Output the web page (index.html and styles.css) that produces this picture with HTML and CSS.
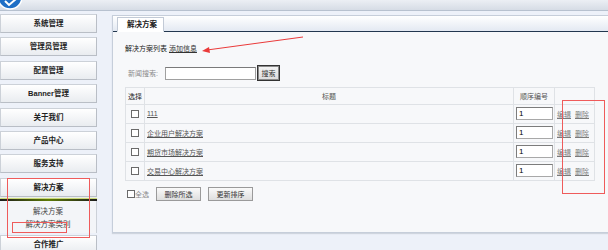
FILE: index.html
```html
<!DOCTYPE html>
<html lang="zh-CN">
<head>
    <meta charset="UTF-8">
    <title>解决方案</title>
    <link rel="stylesheet" href="styles.css">
</head>
<body>
    <div class="topbar">
        <svg class="logo" width="22" height="10" viewBox="0 0 22 10">
            <circle cx="10" cy="-3" r="12" fill="#1f6fc6" stroke="#ffffff" stroke-width="1.5"/>
            <path d="M5 1 L9 5 L16 -1" fill="none" stroke="#ffffff" stroke-width="2"/>
        </svg>
    </div>

    <div class="layout">
        <div class="sidebar">
            <a class="menu-btn">系统管理</a>
            <a class="menu-btn">管理员管理</a>
            <a class="menu-btn">配置管理</a>
            <a class="menu-btn">Banner管理</a>
            <a class="menu-btn">关于我们</a>
            <a class="menu-btn">产品中心</a>
            <a class="menu-btn">服务支持</a>
            <a class="menu-btn">解决方案</a>
            <div class="menu-divider"></div>
            <ul class="submenu">
                <li>解决方案</li>
                <li>解决方案类别</li>
            </ul>
            <a class="menu-btn">合作推广</a>
        </div>

        <div class="panel">
            <div class="panel-tabs">
                <span class="tab">解决方案</span>
            </div>
            <div class="panel-body">
                <div class="list-head">解决方案列表 <a class="link">添加信息</a></div>

                <div class="search-row">
                    <span class="search-label">新闻搜索:</span>
                    <input class="search-input" type="text">
                    <button class="search-btn">搜索</button>
                </div>

                <table class="list-table">
                    <colgroup>
                        <col class="col-check">
                        <col class="col-title">
                        <col class="col-order">
                        <col class="col-ops">
                    </colgroup>
                    <tr>
                        <th class="th-left">选择</th>
                        <th>标题</th>
                        <th>顺序编号</th>
                        <th></th>
                    </tr>
                    <tr>
                        <td class="center"><span class="check"></span></td>
                        <td><a class="link">111</a></td>
                        <td><input class="order-input" value="1"></td>
                        <td class="ops"><a class="op">编辑</a><a class="op">删除</a></td>
                    </tr>
                    <tr>
                        <td class="center"><span class="check"></span></td>
                        <td><a class="link">企业用户解决方案</a></td>
                        <td><input class="order-input" value="1"></td>
                        <td class="ops"><a class="op">编辑</a><a class="op">删除</a></td>
                    </tr>
                    <tr>
                        <td class="center"><span class="check"></span></td>
                        <td><a class="link">期货市场解决方案</a></td>
                        <td><input class="order-input" value="1"></td>
                        <td class="ops"><a class="op">编辑</a><a class="op">删除</a></td>
                    </tr>
                    <tr>
                        <td class="center"><span class="check"></span></td>
                        <td><a class="link">交易中心解决方案</a></td>
                        <td><input class="order-input" value="1"></td>
                        <td class="ops"><a class="op">编辑</a><a class="op">删除</a></td>
                    </tr>
                </table>

                <div class="actions">
                    <label class="check-all"><span class="check"></span>全选</label>
                    <button class="btn">删除所选</button>
                    <button class="btn">更新排序</button>
                </div>
            </div>
        </div>
    </div>

    <!-- annotations drawn over the screenshot -->
    <div class="mark mark-menu"></div>
    <div class="mark mark-sub"></div>
    <div class="mark mark-ops"></div>
    <svg class="arrow" width="608" height="250" viewBox="0 0 608 250">
        <line x1="303" y1="37" x2="207" y2="50" stroke="#ea3a3a" stroke-width="1"/>
        <polygon points="202,51 209,47 210,53" fill="#ea3a3a"/>
    </svg>
</body>
</html>
```

FILE: styles.css
```css
body {
    margin: 0;
    background-color: #edf1f9;
    font-family: "Liberation Sans", "Noto Sans CJK SC", sans-serif;
    font-size: 7px;
    color: #333;
    overflow: hidden;
}
.topbar {
    height: 10px;
    background: linear-gradient(#eceff4, #d6dce5);
    border-bottom: 1px solid #b7c1cf;
}
.logo {
    display: block;
}
.layout {
    display: flex;
    align-items: flex-start;
    padding-top: 3px;
}
.sidebar {
    width: 97px;
    flex-shrink: 0;
}
.menu-btn {
    display: block;
    box-sizing: border-box;
    height: 19px;
    line-height: 17px;
    margin-bottom: 4.4px;
    text-align: center;
    font-size: 7.5px;
    font-weight: bold;
    color: #222;
    background: linear-gradient(#ffffff, #e9ecf0);
    border: 1px solid #ccd1d8;
    border-bottom-color: #b9bec6;
    border-right-color: #b9bec6;
}
.menu-divider {
    height: 2px;
    margin-top: -2.2px;
    background: linear-gradient(90deg, #1c1c1c, #5d7a06 50%, #1c1c1c);
    box-shadow: 0 -1px 1px #c8d86a;
}
.submenu {
    list-style: none;
    margin: 0 0 2px 0;
    padding: 4px 0 2px 0;
    background-color: #f3f5f8;
    border-right: 1px solid #ccd1d8;
}
.submenu li {
    height: 13px;
    line-height: 13px;
    text-align: center;
    color: #444;
    font-size: 7.5px;
}
.panel {
    flex: 1;
    margin-left: 15px;
    margin-top: 1px;
    border: 1px solid #c6ceda;
    border-right: none;
    box-shadow: 0 1px 1px #cfd5de;
}
.panel-tabs {
    height: 15px;
    padding-left: 4px;
    background: linear-gradient(#ffffff, #e3e9f2);
    border-bottom: 1px solid #23374f;
    display: flex;
    align-items: flex-end;
}
.tab {
    box-sizing: border-box;
    width: 47px;
    height: 15px;
    line-height: 14px;
    margin-bottom: -1px;
    padding-left: 9px;
    font-size: 7.5px;
    font-weight: bold;
    color: #222;
    background-color: #ffffff;
    border: 1px solid #c2cad6;
    border-bottom: 1px solid #ffffff;
}
.panel-body {
    height: 200px;
    box-sizing: border-box;
    padding: 11px 0 0 12px;
    background-color: #f7f8fa;
}
.list-head {
    height: 12px;
    line-height: 12px;
    color: #222;
}
.link {
    color: #555;
    text-decoration: underline;
}
.list-head .link {
    color: #333;
}
.search-row {
    display: flex;
    align-items: center;
    height: 16px;
    margin-top: 10px;
    padding-left: 3px;
}
.search-label {
    color: #8a8a8a;
    width: 37px;
}
.search-input {
    box-sizing: border-box;
    width: 91px;
    height: 13px;
    margin: 0;
    padding: 0;
    background-color: #fff;
    border: 1px solid #a0a0a0;
    border-top-color: #7a7a7a;
}
.search-btn {
    box-sizing: border-box;
    width: 23px;
    height: 16px;
    margin: 0 0 0 1px;
    padding: 0;
    font-family: inherit;
    font-size: 7px;
    color: #333;
    background: linear-gradient(#f4f4f4, #dcdcdc);
    border: 1px solid #333;
    box-shadow: inset 0 0 0 1px #8a8a8a;
}
.list-table {
    width: 469px;
    margin-top: 5.5px;
    border-collapse: collapse;
    table-layout: fixed;
}
.col-check { width: 19px; }
.col-title { width: 369px; }
.col-order { width: 41px; }
.col-ops { width: 40px; }
.list-table th,
.list-table td {
    border: 1px solid #dfe2e6;
    padding: 0;
    white-space: nowrap;
}
.list-table th {
    height: 16px;
    font-weight: normal;
    color: #555;
    text-align: center;
}
.list-table th.th-left {
    color: #222;
}
.list-table td {
    height: 18px;
    padding-left: 2px;
}
.list-table td.center {
    text-align: center;
    padding-left: 0;
}
.list-table td.ops {
    padding-left: 2px;
    overflow: visible;
}
.check {
    display: inline-block;
    box-sizing: border-box;
    width: 8px;
    height: 8px;
    vertical-align: middle;
    background-color: #fff;
    border: 1px solid #6a6a6a;
}
.order-input {
    display: block;
    box-sizing: border-box;
    width: 37px;
    height: 13px;
    margin: 0;
    padding: 0 0 0 2px;
    font-family: "Liberation Sans", sans-serif;
    font-size: 8px;
    color: #000;
    background-color: #fff;
    border: 1px solid #a8a8a8;
    border-top-color: #7c7c7c;
    border-left-color: #7c7c7c;
}
.op {
    color: #7a7a7a;
    text-decoration: underline;
    margin-right: 4px;
}
.actions {
    display: flex;
    align-items: center;
    margin-top: 6px;
    padding-left: 2px;
}
.check-all {
    display: flex;
    align-items: center;
    color: #8a8a8a;
    width: 29px;
}
.btn {
    box-sizing: border-box;
    width: 45px;
    height: 14px;
    margin: 0 7px 0 0;
    padding: 0;
    font-family: inherit;
    font-size: 7px;
    color: #333;
    background: linear-gradient(#fafafa, #dedede);
    border: 1px solid #9a9a9a;
}
.mark {
    position: absolute;
    border: 1px solid #ef5b5b;
}
.mark-menu {
    left: 7px;
    top: 178px;
    width: 81px;
    height: 58px;
}
.mark-sub {
    left: 12px;
    top: 222px;
    width: 53px;
    height: 9px;
}
.mark-ops {
    left: 562px;
    top: 100px;
    width: 41px;
    height: 92px;
}
.arrow {
    position: absolute;
    left: 0;
    top: 0;
    pointer-events: none;
}
```
